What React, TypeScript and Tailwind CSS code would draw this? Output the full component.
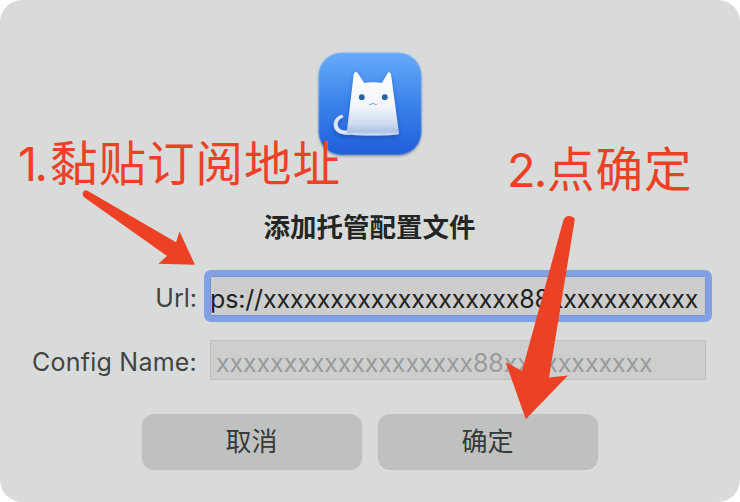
const ui = 'font-["Inter","Noto_Sans_CJK_SC",sans-serif]';

function AppIcon() {
  return (
    <svg width="112" height="112" viewBox="314 48 112 112" className="block shrink-0">
      <defs>
        <linearGradient id="tile" x1="0" y1="0" x2="0" y2="1">
          <stop offset="0" stopColor="#66abfa" />
          <stop offset="0.5" stopColor="#3b82ea" />
          <stop offset="1" stopColor="#205edb" />
        </linearGradient>
        <linearGradient id="cat" x1="0" y1="0" x2="0" y2="1">
          <stop offset="0" stopColor="#ffffff" />
          <stop offset="0.55" stopColor="#f1f5fc" />
          <stop offset="0.82" stopColor="#cddcf3" />
          <stop offset="0.94" stopColor="#abc3e7" />
          <stop offset="1" stopColor="#d5e3f7" />
        </linearGradient>
        <filter id="soft" x="-20%" y="-20%" width="140%" height="150%">
          <feDropShadow dx="0" dy="1.2" stdDeviation="1.2" floodColor="#000" floodOpacity="0.35" />
        </filter>
        <filter id="catShade" x="-20%" y="-20%" width="140%" height="150%">
          <feDropShadow dx="0" dy="2.5" stdDeviation="2" floodColor="#0d3b9a" floodOpacity="0.5" />
        </filter>
      </defs>
      <rect x="318.5" y="52.5" width="103" height="102.5" rx="23" fill="url(#tile)" filter="url(#soft)" />
      <rect x="319" y="53" width="102" height="101.5" rx="22.5" fill="none" stroke="#fff" strokeOpacity="0.16" />
      <g filter="url(#catShade)">
        <path d="M342.4 114.8C336 115.8 332.6 122 334 127C335.5 132.5 340.5 134.6 349 134.8L349 130.5C342.5 131 338.8 129.5 337.8 125.5C337 122 339 118.8 343.4 117.2Z" fill="#dbe7f8" />
        <path d="M346.5 134L349.5 110L353.7 74.5Q355.3 70.3 358 73.5L364.2 83Q373 81.5 382 83L387.5 73.5Q389.5 70.5 391 74.5L395.3 106L399 134Q398 135.4 373 135.4Q347 135.4 346.5 134Z" fill="url(#cat)" />
      </g>
      <circle cx="361.8" cy="97.2" r="2.9" fill="#2a62aa" />
      <circle cx="384.8" cy="97.2" r="2.9" fill="#2a62aa" />
      <path d="M369.2 104.4Q371.5 104.7 373 103.3Q374.5 104.7 376.8 104.4" fill="none" stroke="#7899c4" strokeWidth="1" />
    </svg>
  );
}

export default function App() {
  return (
    <div className={`relative h-[502px] w-[740px] overflow-hidden bg-white ${ui}`} lang="zh-CN">
      <main className="flex h-full w-full flex-col items-center rounded-[22px] bg-[#d9dbda] pt-12 text-[26px] leading-8 text-[#434544]">
        <AppIcon />
        <h1 className="mt-[51px] h-8 pr-px text-[26.5px] font-bold text-[#242625]">添加托管配置文件</h1>
        <div className="mt-[33px] flex w-full flex-col gap-6">
          <label className="flex h-10 items-center">
            <span className="w-[197px] whitespace-nowrap pt-1 text-right text-[25px]">Url:</span>
            <span className="ml-[13px] flex h-10 w-[496px] items-center overflow-hidden border border-[#7391d5] bg-[#cccdcc] pt-1.5 whitespace-nowrap text-[25px] tracking-[-0.16px] text-[#202221] outline-6 outline-[#82a1e5] rounded-[1px]">
              <span className="-ml-px">ps://xxxxxxxxxxxxxxxxxxx88xxxxxxxxxxx</span>
            </span>
          </label>
          <label className="flex h-10 items-center">
            <span className="w-[197px] whitespace-nowrap pt-1 text-right text-[25px] tracking-[0.22px]">Config Name:</span>
            <span className="ml-[13px] flex h-10 w-[496px] items-center overflow-hidden border border-[#bfc1c0] bg-[#cdcecd] pt-1.5 pl-[5px] whitespace-nowrap text-[25px] tracking-[-0.12px] text-[#9a9c9b]">
              xxxxxxxxxxxxxxxxxxx88xxxxxxxxxxx
            </span>
          </label>
        </div>
        <div className="mt-[34px] flex gap-4">
          <button className="h-14 w-[220px] rounded-xl bg-[#bfc1c0] pr-px text-[26px] text-[#373938]">取消</button>
          <button className="h-14 w-[220px] rounded-xl bg-[#bfc1c0] pr-px text-[26px] text-[#373938]">确定</button>
        </div>
      </main>

      <div className="absolute left-[18px] top-[132px] flex h-16 items-center whitespace-nowrap text-[#ed4126]">
        <span className="w-8 text-[47px] font-normal tracking-[-2.5px]">1.</span>
        <span className="text-[47.5px] font-normal tracking-[1px]">黏贴订阅地址</span>
      </div>
      <div className="absolute left-[507px] top-[138px] flex h-16 items-center whitespace-nowrap text-[#ed4126]">
        <span className="w-10 text-[47px] font-normal tracking-[-2px]">2.</span>
        <span className="text-[47.5px] font-normal tracking-[1px]">点确定</span>
      </div>
      <svg className="pointer-events-none absolute inset-0" width="740" height="502" viewBox="0 0 740 502" fill="#ed4126">
        <path d="M87.5 190.7Q84.5 189.3 83 192.3Q82 195.3 84.5 197.5L167 256L158.3 263.7L195 264.7L179.5 231.5L176 242.3Z" />
        <path d="M574.7 220Q574.8 216.5 569.5 216Q565 215.8 563.3 220.5L522 371L505.5 362L525.8 419.3L568 375.5L549 377.5Z" />
      </svg>
    </div>
  );
}
